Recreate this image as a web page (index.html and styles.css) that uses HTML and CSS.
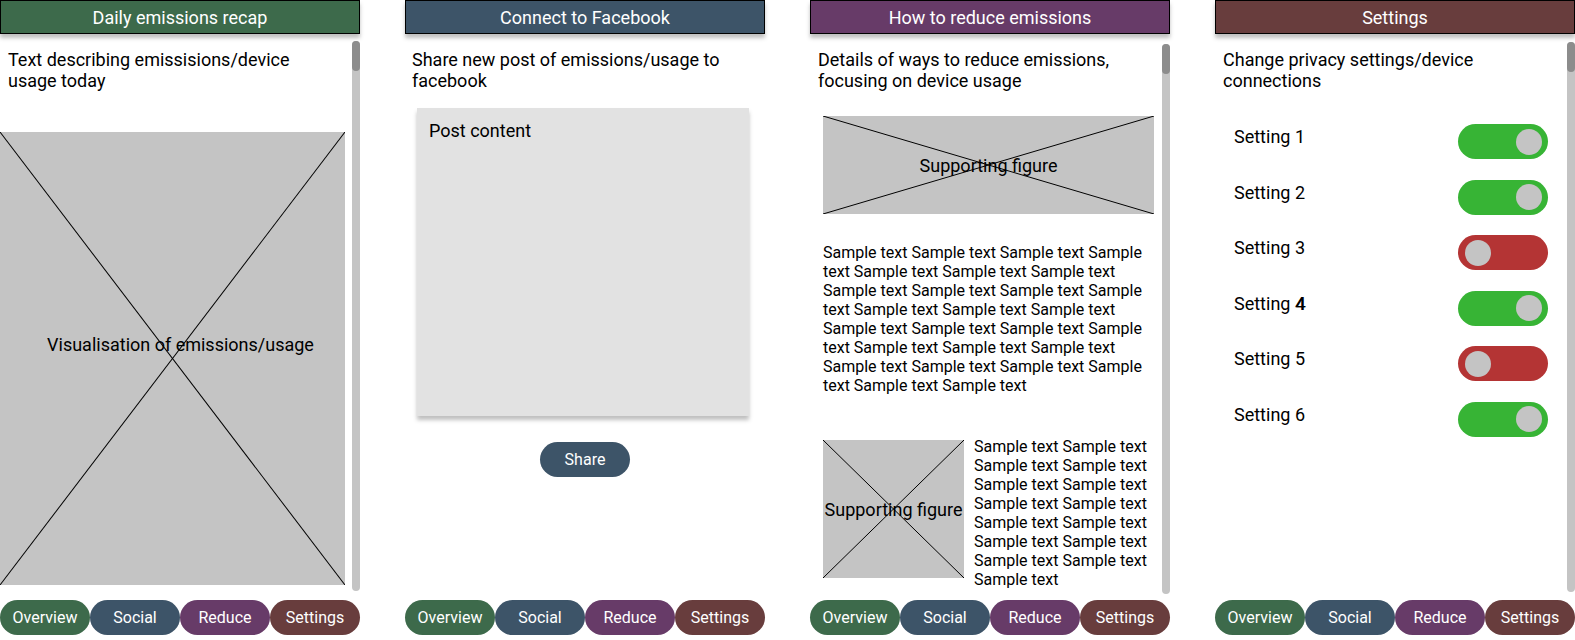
FILE: index.html
```html
<!DOCTYPE html>
<html lang="en">

<head>
    <meta charset="UTF-8">
    <meta name="viewport" content="width=device-width, initial-scale=1.0">
    <title>Emissions app wireframes</title>
    <link rel="stylesheet" href="styles.css">
</head>

<body>
    <div class="screens">

        <!-- Overview screen -->
        <section class="phone">
            <header class="phone-header green">Daily emissions recap</header>
            <div class="phone-body">
                <p class="intro">Text describing emissisions/device usage today</p>
                <div class="placeholder visual">
                    <span>Visualisation of emissions/usage</span>
                    <svg class="cross" viewBox="0 0 100 100" preserveAspectRatio="none">
                        <line x1="0" y1="0" x2="100" y2="100" />
                        <line x1="100" y1="0" x2="0" y2="100" />
                    </svg>
                </div>
            </div>
            <div class="scrollbar"><div class="thumb"></div></div>
            <nav class="tabs">
                <a class="tab green">Overview</a>
                <a class="tab blue">Social</a>
                <a class="tab purple">Reduce</a>
                <a class="tab brown">Settings</a>
            </nav>
        </section>

        <!-- Social screen -->
        <section class="phone">
            <header class="phone-header blue">Connect to Facebook</header>
            <div class="phone-body">
                <p class="intro social">Share new post of emissions/usage to facebook</p>
                <div class="post-box">Post content</div>
                <a class="share-button blue">Share</a>
            </div>
            <nav class="tabs">
                <a class="tab green">Overview</a>
                <a class="tab blue">Social</a>
                <a class="tab purple">Reduce</a>
                <a class="tab brown">Settings</a>
            </nav>
        </section>

        <!-- Reduce screen -->
        <section class="phone">
            <header class="phone-header purple">How to reduce emissions</header>
            <div class="phone-body">
                <p class="intro">Details of ways to reduce emissions, focusing on device usage</p>
                <div class="placeholder wide-figure">
                    <span>Supporting figure</span>
                    <svg class="cross" viewBox="0 0 100 100" preserveAspectRatio="none">
                        <line x1="0" y1="0" x2="100" y2="100" />
                        <line x1="100" y1="0" x2="0" y2="100" />
                    </svg>
                </div>
                <p class="sample">Sample text Sample text Sample text Sample text Sample text Sample text Sample text Sample text Sample text Sample text Sample text Sample text Sample text Sample text Sample text Sample text Sample text Sample text Sample text Sample text Sample text Sample text Sample text Sample text Sample text Sample text Sample text</p>
                <div class="figure-row">
                    <div class="placeholder small-figure">
                        <span>Supporting figure</span>
                        <svg class="cross" viewBox="0 0 100 100" preserveAspectRatio="none">
                            <line x1="0" y1="0" x2="100" y2="100" />
                            <line x1="100" y1="0" x2="0" y2="100" />
                        </svg>
                    </div>
                    <p class="sample side">Sample text Sample text Sample text Sample text Sample text Sample text Sample text Sample text Sample text Sample text Sample text Sample text Sample text Sample text Sample text</p>
                </div>
            </div>
            <div class="scrollbar low"><div class="thumb"></div></div>
            <nav class="tabs">
                <a class="tab green">Overview</a>
                <a class="tab blue">Social</a>
                <a class="tab purple">Reduce</a>
                <a class="tab brown">Settings</a>
            </nav>
        </section>

        <!-- Settings screen -->
        <section class="phone">
            <header class="phone-header brown">Settings</header>
            <div class="phone-body">
                <p class="intro">Change privacy settings/device connections</p>
                <div class="settings-list">
                    <div class="setting"><span>Setting 1</span><div class="switch on"><div class="knob"></div></div></div>
                    <div class="setting"><span>Setting 2</span><div class="switch on"><div class="knob"></div></div></div>
                    <div class="setting"><span>Setting 3</span><div class="switch off"><div class="knob"></div></div></div>
                    <div class="setting"><span>Setting <b class="smudged">4</b></span><div class="switch on"><div class="knob"></div></div></div>
                    <div class="setting"><span>Setting 5</span><div class="switch off"><div class="knob"></div></div></div>
                    <div class="setting"><span>Setting 6</span><div class="switch on"><div class="knob"></div></div></div>
                </div>
            </div>
            <div class="scrollbar mid"><div class="thumb"></div></div>
            <nav class="tabs">
                <a class="tab green">Overview</a>
                <a class="tab blue">Social</a>
                <a class="tab purple">Reduce</a>
                <a class="tab brown">Settings</a>
            </nav>
        </section>

    </div>
</body>
</html>
```

FILE: styles.css
```css
body {
    margin: 0;
    font-family: Roboto, "Liberation Sans", sans-serif;
    background-color: white;
    color: black;
    overflow: hidden;
}

.screens {
    display: flex;
    gap: 45px;
}

/* One phone frame */
.phone {
    position: relative;
    width: 360px;
    height: 640px;
    display: flex;
    flex-direction: column;
}

.phone-header {
    position: relative;
    z-index: 1;
    height: 34px;
    box-sizing: border-box;
    border: 1px solid black;
    color: white;
    font-size: 18px;
    line-height: 33px;
    text-align: center;
    box-shadow: 0 4px 4px rgba(0, 0, 0, 0.25);
}

.phone-body {
    flex: 1;
    overflow: hidden;
}

.intro {
    margin: 15px 0 0;
    padding: 0 22px 0 8px;
    font-size: 18px;
    line-height: 21px;
}

    .intro.social {
        padding-left: 7px;
    }

/* Colours */
.green {
    background-color: rgb(61, 106, 75);
}

.blue {
    background-color: rgb(61, 84, 104);
}

.purple {
    background-color: rgb(103, 59, 104);
}

.brown {
    background-color: rgb(104, 61, 61);
}

/* Scrollbar */
.scrollbar {
    position: absolute;
    right: 0;
    top: 41px;
    width: 8px;
    height: 550px;
    border-radius: 4px;
    background-color: rgb(196, 196, 196);
}

    .scrollbar.low {
        top: 44px;
    }

    .scrollbar.mid {
        top: 42px;
    }

.thumb {
    height: 30px;
    border-radius: 4px;
    background-color: rgb(140, 140, 140);
}

/* Bottom tabs */
.tabs {
    display: flex;
    margin-bottom: 5px;
}

.tab {
    width: 90px;
    height: 35px;
    border-radius: 18px;
    color: white;
    font-size: 16px;
    display: flex;
    align-items: center;
    justify-content: center;
}

/* Placeholder figures */
.placeholder {
    position: relative;
    background-color: rgb(196, 196, 196);
    display: flex;
    align-items: center;
    justify-content: center;
    font-size: 18px;
    overflow: hidden;
}

.cross {
    position: absolute;
    left: 0;
    top: 0;
    width: 100%;
    height: 100%;
}

    .cross line {
        stroke: black;
        stroke-width: 1;
        vector-effect: non-scaling-stroke;
    }

.visual {
    width: 345px;
    height: 453px;
    box-sizing: border-box;
    padding: 0 0 28px 16px;
    margin-top: 41px;
}

/* Social */
.post-box {
    width: 332px;
    height: 308px;
    box-sizing: border-box;
    margin: 17px 0 0 12px;
    padding: 12px 12px;
    background-color: rgb(226, 226, 226);
    box-shadow: 0 4px 4px rgba(0, 0, 0, 0.25);
    font-size: 18px;
    line-height: 21px;
}

.share-button {
    display: flex;
    align-items: center;
    justify-content: center;
    width: 90px;
    height: 35px;
    margin: 26px auto 0;
    border-radius: 18px;
    color: white;
    font-size: 16px;
}

/* Reduce */
.wide-figure {
    width: 331px;
    height: 98px;
    margin: 25px 0 0 13px;
}

.sample {
    margin: 29px 0 0 13px;
    width: 331px;
    font-size: 16px;
    line-height: 19px;
}

.figure-row {
    display: flex;
    align-items: flex-start;
    gap: 10px;
    margin: 45px 0 0 13px;
}

.small-figure {
    flex: none;
    width: 141px;
    height: 138px;
}

.sample.side {
    margin: -3px 0 0;
    width: 180px;
}

/* Settings */
.settings-list {
    display: flex;
    flex-direction: column;
    gap: 20.5px;
    margin-top: 33px;
    padding: 0 27px 0 19px;
}

.setting {
    display: flex;
    justify-content: space-between;
    align-items: flex-start;
    font-size: 18px;
    line-height: 21px;
}

    .setting span {
        margin-top: 2px;
    }

.smudged {
    font-weight: normal;
    text-shadow: 0.8px 0 0 black;
}

.switch {
    width: 90px;
    height: 35px;
    box-sizing: border-box;
    padding: 0 6px 0 7px;
    border-radius: 18px;
    display: flex;
    align-items: center;
}

    .switch.on {
        background-color: rgb(55, 180, 53);
        justify-content: flex-end;
    }

    .switch.off {
        background-color: rgb(180, 52, 52);
    }

.knob {
    width: 26px;
    height: 26px;
    border-radius: 50%;
    background-color: rgb(196, 196, 196);
}
```
